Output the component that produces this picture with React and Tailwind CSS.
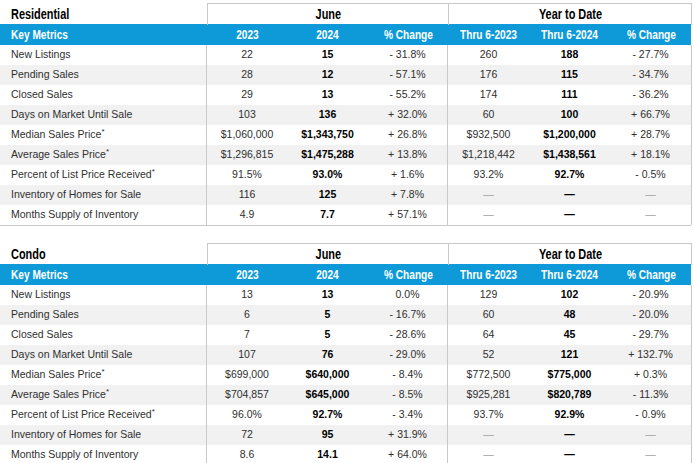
import React from "react";

const residential = [
  ["New Listings", "22", "15", "- 31.8%", "260", "188", "- 27.7%"],
  ["Pending Sales", "28", "12", "- 57.1%", "176", "115", "- 34.7%"],
  ["Closed Sales", "29", "13", "- 55.2%", "174", "111", "- 36.2%"],
  ["Days on Market Until Sale", "103", "136", "+ 32.0%", "60", "100", "+ 66.7%"],
  ["Median Sales Price*", "$1,060,000", "$1,343,750", "+ 26.8%", "$932,500", "$1,200,000", "+ 28.7%"],
  ["Average Sales Price*", "$1,296,815", "$1,475,288", "+ 13.8%", "$1,218,442", "$1,438,561", "+ 18.1%"],
  ["Percent of List Price Received*", "91.5%", "93.0%", "+ 1.6%", "93.2%", "92.7%", "- 0.5%"],
  ["Inventory of Homes for Sale", "116", "125", "+ 7.8%", "—", "—", "—"],
  ["Months Supply of Inventory", "4.9", "7.7", "+ 57.1%", "—", "—", "—"],
];

const condo = [
  ["New Listings", "13", "13", "0.0%", "129", "102", "- 20.9%"],
  ["Pending Sales", "6", "5", "- 16.7%", "60", "48", "- 20.0%"],
  ["Closed Sales", "7", "5", "- 28.6%", "64", "45", "- 29.7%"],
  ["Days on Market Until Sale", "107", "76", "- 29.0%", "52", "121", "+ 132.7%"],
  ["Median Sales Price*", "$699,000", "$640,000", "- 8.4%", "$772,500", "$775,000", "+ 0.3%"],
  ["Average Sales Price*", "$704,857", "$645,000", "- 8.5%", "$925,281", "$820,789", "- 11.3%"],
  ["Percent of List Price Received*", "96.0%", "92.7%", "- 3.4%", "93.7%", "92.9%", "- 0.9%"],
  ["Inventory of Homes for Sale", "72", "95", "+ 31.9%", "—", "—", "—"],
  ["Months Supply of Inventory", "8.6", "14.1", "+ 64.0%", "—", "—", "—"],
];

const cols = "grid grid-cols-[207px_80px_81px_80px_81px_81px_82px]";
const bold = "font-['Liberation_Sans',Arial,sans-serif] font-bold";

// condensed header text: squeeze Arial bold horizontally
const Cond = ({ children, left }) => (
  <span className={`inline-block whitespace-nowrap scale-x-[0.78] ${left ? "origin-left" : "origin-center"}`}>
    {children}
  </span>
);

const Label = ({ text }) => {
  const star = text.endsWith("*");
  const base = star ? text.slice(0, -1) : text;
  return (
    <div className="flex items-center pl-[11px] border-r border-[#c9c9c9]">
      {base}
      {star && <span className="text-[8px] relative -top-[3px]">*</span>}
    </div>
  );
};

const MetricsTable = ({ title, rows }) => (
  <div className="w-[691px] border-b border-[#c9c9c9]">
    <div className={`${cols} h-[21px] text-[14px] text-black ${bold}`}>
      <div className="flex items-center pl-[11px]"><Cond left>{title}</Cond></div>
      <div className="col-span-3 flex items-center justify-center border-t border-l border-[#c9c9c9]"><Cond>June</Cond></div>
      <div className="col-span-3 flex items-center justify-center border-t border-l border-r border-[#c9c9c9]"><Cond>Year to Date</Cond></div>
    </div>
    <div className={`${cols} h-[21px] bg-[#0e9ad9] text-white text-[13px] ${bold}`}>
      <div className="flex items-center pl-[11px]"><Cond left>Key Metrics</Cond></div>
      <div className="flex items-center justify-center"><Cond>2023</Cond></div>
      <div className="flex items-center justify-center"><Cond>2024</Cond></div>
      <div className="flex items-center justify-center"><Cond>% Change</Cond></div>
      <div className="flex items-center justify-center"><Cond>Thru 6-2023</Cond></div>
      <div className="flex items-center justify-center"><Cond>Thru 6-2024</Cond></div>
      <div className="flex items-center justify-center"><Cond>% Change</Cond></div>
    </div>
    {rows.map((r, i) => (
      <div
        key={r[0]}
        className={`${cols} h-[20px] text-[10.5px] text-[#2f2f2f] font-['Liberation_Sans',Arial,sans-serif] ${i % 2 === 1 ? "bg-[#f1f1f1]" : "bg-white"}`}
      >
        <Label text={r[0]} />
        <div className="flex items-center justify-center">{r[1]}</div>
        <div className="flex items-center justify-center font-bold text-black">{r[2]}</div>
        <div className="flex items-center justify-center border-r border-[#c9c9c9]">{r[3]}</div>
        <div className={`flex items-center justify-center ${r[4] === "—" ? "text-[#a0a0a0]" : ""}`}>{r[4]}</div>
        <div className="flex items-center justify-center font-bold text-black">{r[5]}</div>
        <div className={`flex items-center justify-center border-r border-[#c9c9c9] ${r[6] === "—" ? "text-[#a0a0a0]" : ""}`}>{r[6]}</div>
      </div>
    ))}
  </div>
);

export default function App() {
  return (
    <div className="w-[694px] h-[463px] bg-white pt-[3px] overflow-hidden">
      <MetricsTable title="Residential" rows={residential} />
      <div className="mt-[17px]">
        <MetricsTable title="Condo" rows={condo} />
      </div>
    </div>
  );
}
